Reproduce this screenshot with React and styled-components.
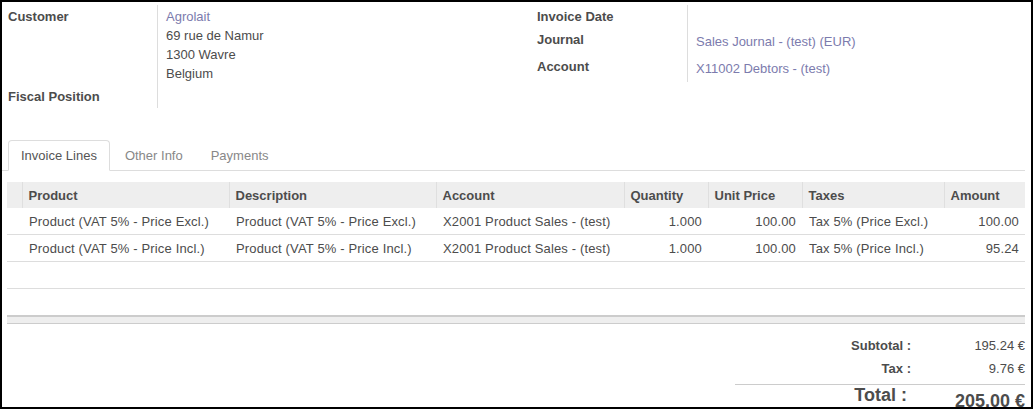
import React from 'react'
import styled, { createGlobalStyle } from 'styled-components'

const GlobalStyle = createGlobalStyle`
    html, body {
        margin: 0;
        padding: 0;
        background: #fff;
    }
    body {
        font-family: "Liberation Sans", Arial, sans-serif;
        font-size: 13px;
        color: #4c4c4c;
    }
`;

const Frame = styled.div`
    box-sizing: border-box;
    width: 1033px;
    height: 409px;
    border: 2px solid #000;
    overflow: hidden;
    background: #fff;
`;

const Groups = styled.div`
    display: grid;
    grid-template-columns: 529px 1fr;
    padding: 3px 0 0 6px;
`;

const Group = styled.div`
    display: grid;
    grid-template-columns: ${p => p.labelWidth}px 1fr;
    align-content: start;
`;

const Label = styled.div`
    font-weight: bold;
    line-height: 19px;
    padding-top: 2px;
    height: ${p => p.h}px;
    box-sizing: border-box;
    border-right: 1px solid #ddd;
`;

const Value = styled.div`
    line-height: 19px;
    padding: ${p => p.pt || 2}px 0 0 8px;
    height: ${p => p.h}px;
    box-sizing: border-box;
`;

const Link = styled.div`
    color: #7c7bad;
`;

const TabBar = styled.div`
    display: flex;
    margin: 32px 6px 0 0;
    padding-left: 6px;
    height: 31px;
    box-sizing: border-box;
    border-bottom: 1px solid #ddd;
`;

const Tab = styled.div`
    box-sizing: border-box;
    height: 31px;
    line-height: 29px;
    padding: 0 12px;
    margin-right: 2px;
    border: 1px solid ${p => (p.active ? '#ddd' : 'transparent')};
    border-bottom-color: ${p => (p.active ? '#fff' : 'transparent')};
    border-radius: 4px 4px 0 0;
    background: ${p => (p.active ? '#fff' : 'transparent')};
    color: ${p => (p.active ? '#555' : '#888')};
`;

const Table = styled.table`
    margin: 11px 0 0 5px;
    width: 1018px;
    table-layout: fixed;
    border-collapse: collapse;
    font-size: 13px;
    color: #4c4c4c;
`;

const Th = styled.th`
    height: 26px;
    padding: 0 6px;
    background: #eee;
    border-left: 1px solid #dfdfdf;
    text-align: left;
    font-weight: bold;
    white-space: nowrap;
    &:first-child {
        border-left: none;
    }
`;

const Td = styled.td`
    height: 26px;
    padding: 0 6px 0 ${p => (p.first ? 0 : 7)}px;
    text-align: ${p => (p.num ? 'right' : 'left')};
    border-bottom: 1px solid ${p => (p.last ? 'transparent' : '#ddd')};
    white-space: nowrap;
    overflow: hidden;
    letter-spacing: 0.15px;
`;

const Foot = styled.td`
    height: 6px;
    padding: 0;
    background: #eee;
    border-top: 2px solid #ccc;
    border-bottom: 1px solid #ccc;
`;

const Totals = styled.div`
    display: grid;
    grid-template-columns: 1fr 114px;
    width: 290px;
    margin: 10px 6px 0 auto;
`;

const TotalLabel = styled.div`
    text-align: right;
    font-weight: bold;
    line-height: 23px;
    ${p => p.big && `
        font-size: 18px;
        line-height: 21px;
        border-top: 1px solid #ccc;
        margin-top: 4px;
        padding-right: 4px;
    `}
`;

const TotalValue = styled.div`
    text-align: right;
    line-height: 23px;
    ${p => p.big && `
        font-size: 18px;
        font-weight: bold;
        line-height: 21px;
        border-top: 1px solid #ccc;
        margin-top: 4px;
        padding-top: 6px;
    `}
`;

const columns = [
    { key: 'handle', label: '', width: 15 },
    { key: 'product', label: 'Product', width: 207 },
    { key: 'description', label: 'Description', width: 207 },
    { key: 'account', label: 'Account', width: 188 },
    { key: 'quantity', label: 'Quantity', width: 84, num: true },
    { key: 'price', label: 'Unit Price', width: 94, num: true },
    { key: 'taxes', label: 'Taxes', width: 142 },
    { key: 'amount', label: 'Amount', width: 81, num: true },
];

const lines = [
    {
        product: 'Product (VAT 5% - Price Excl.)',
        description: 'Product (VAT 5% - Price Excl.)',
        account: 'X2001 Product Sales - (test)',
        quantity: '1.000',
        price: '100.00',
        taxes: 'Tax 5% (Price Excl.)',
        amount: '100.00',
    },
    {
        product: 'Product (VAT 5% - Price Incl.)',
        description: 'Product (VAT 5% - Price Incl.)',
        account: 'X2001 Product Sales - (test)',
        quantity: '1.000',
        price: '100.00',
        taxes: 'Tax 5% (Price Incl.)',
        amount: '95.24',
    },
];

const App = () => {
    return (
        <Frame>
            <GlobalStyle />
            <Groups>
                <Group labelWidth={150}>
                    <Label h={80}>Customer</Label>
                    <Value h={80}>
                        <Link>Agrolait</Link>
                        <div>69 rue de Namur</div>
                        <div>1300 Wavre</div>
                        <div>Belgium</div>
                    </Value>
                    <Label h={23}>Fiscal Position</Label>
                    <Value h={23} />
                </Group>
                <Group labelWidth={151}>
                    <Label h={23}>Invoice Date</Label>
                    <Value h={23} />
                    <Label h={27}>Journal</Label>
                    <Value h={27} pt={4}><Link>Sales Journal - (test) (EUR)</Link></Value>
                    <Label h={27}>Account</Label>
                    <Value h={27} pt={4}><Link>X11002 Debtors - (test)</Link></Value>
                </Group>
            </Groups>

            <TabBar>
                <Tab active>Invoice Lines</Tab>
                <Tab>Other Info</Tab>
                <Tab>Payments</Tab>
            </TabBar>

            <Table>
                <colgroup>
                    {columns.map(c => <col key={c.key} style={{ width: c.width }} />)}
                </colgroup>
                <thead>
                    <tr>
                        {columns.map(c => <Th key={c.key}>{c.label}</Th>)}
                    </tr>
                </thead>
                <tbody>
                    {lines.map((line, i) => (
                        <tr key={i}>
                            {columns.map(c => (
                                <Td key={c.key} num={c.num} first={c.key === 'handle'}>{line[c.key]}</Td>
                            ))}
                        </tr>
                    ))}
                    <tr>{columns.map(c => <Td key={c.key} first={c.key === 'handle'} />)}</tr>
                    <tr>{columns.map(c => <Td key={c.key} first={c.key === 'handle'} last />)}</tr>
                </tbody>
                <tfoot>
                    <tr><Foot colSpan={columns.length} /></tr>
                </tfoot>
            </Table>

            <Totals>
                <TotalLabel>Subtotal :</TotalLabel>
                <TotalValue>195.24 €</TotalValue>
                <TotalLabel>Tax :</TotalLabel>
                <TotalValue>9.76 €</TotalValue>
                <TotalLabel big>Total :</TotalLabel>
                <TotalValue big>205.00 €</TotalValue>
            </Totals>
        </Frame>
    )
}

export default App
